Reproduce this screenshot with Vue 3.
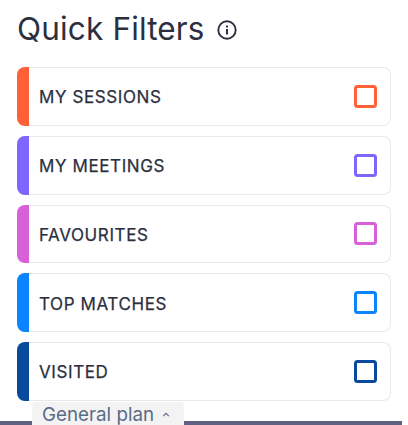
<script setup>
const filters = [
  { label: 'MY SESSIONS', color: '#ff6038' },
  { label: 'MY MEETINGS', color: '#7f66ff' },
  { label: 'FAVOURITES', color: '#d860d8' },
  { label: 'TOP MATCHES', color: '#0a84ff' },
  { label: 'VISITED', color: '#0a4a9c' },
]
</script>

<template>
  <div class="page">
    <header class="head">
      <h1 class="title">Quick Filters</h1>
      <svg class="info" viewBox="0 0 20 20" width="20" height="20" fill="none" stroke="#2c2f3f">
        <circle cx="10" cy="10" r="8.7" stroke-width="1.9" />
        <path d="M10 9v5.4" stroke-width="2" />
        <path d="M10 5.4v2" stroke-width="2" />
      </svg>
    </header>
    <ul class="list">
      <li v-for="f in filters" :key="f.label" class="row">
        <span class="strip" :style="{ background: f.color }"></span>
        <span class="label">{{ f.label }}</span>
        <span class="check" :style="{ borderColor: f.color }"></span>
      </li>
    </ul>
    <footer class="foot">
      <div class="bar"></div>
      <div class="tag">
        <span>General plan</span>
        <svg viewBox="0 0 10 6" width="8" height="5" fill="none" stroke="#5a6b85" stroke-width="1.4">
          <path d="M1.5 5 5 1.5 8.500 5" />
        </svg>
      </div>
    </footer>
  </div>
</template>

<style scoped>
.page {
  position: relative;
  width: 408px;
  height: 425px;
  overflow: hidden;
  background: #fff;
  box-sizing: border-box;
  padding: 9px 17px 0;
  font-family: Inter, "Noto Sans", sans-serif;
}
.head {
  display: flex;
  align-items: center;
  gap: 12px;
  height: 40px;
  margin-bottom: 18px;
}
.title {
  margin: 0;
  font-size: 31.5px;
  font-weight: 400;
  line-height: 40px;
  letter-spacing: 0.15px;
  color: #2c2f3f;
}
.info {
  margin-top: 1px;
}
.list {
  list-style: none;
  margin: 0;
  padding: 0;
  width: 374px;
  display: flex;
  flex-direction: column;
  gap: 10px;
}
.row {
  display: flex;
  align-items: center;
  height: 58.75px;
  box-sizing: border-box;
  border: 1px solid #e9e9ec;
  border-left: 0;
  border-radius: 8px;
  background: #fff;
  padding-right: 14px;
}
.strip {
  align-self: stretch;
  width: 12px;
  margin: -1px 0;
  border-radius: 8px 0 0 8px;
}
.label {
  flex: 1;
  margin-left: 10px;
  padding-top: 2px;
  font-size: 17px;
  font-weight: 400;
  letter-spacing: 0.6px;
  color: #2c2f3f;
  -webkit-text-stroke: 0.25px #2c2f3f;
}
.check {
  width: 23px;
  height: 23px;
  margin-right: -0.5px;
  box-sizing: border-box;
  border: 3px solid;
  border-radius: 3.5px;
}
.foot {
  position: absolute;
  left: 0;
  right: 0;
  bottom: 0;
  height: 23px;
}
.bar {
  position: absolute;
  left: 0;
  bottom: 0;
  width: 402px;
  height: 4px;
  background: #5f607f;
}
.tag {
  position: absolute;
  left: 32px;
  top: 0;
  width: 152px;
  height: 23px;
  box-sizing: border-box;
  padding: 2px 0 0 10px;
  display: flex;
  align-items: center;
  gap: 8px;
  background: #f3f3f4;
  border-radius: 4px 4px 0 0;
  color: #5a6b85;
  font-size: 18.8px;
  font-weight: 400;
}
</style>
